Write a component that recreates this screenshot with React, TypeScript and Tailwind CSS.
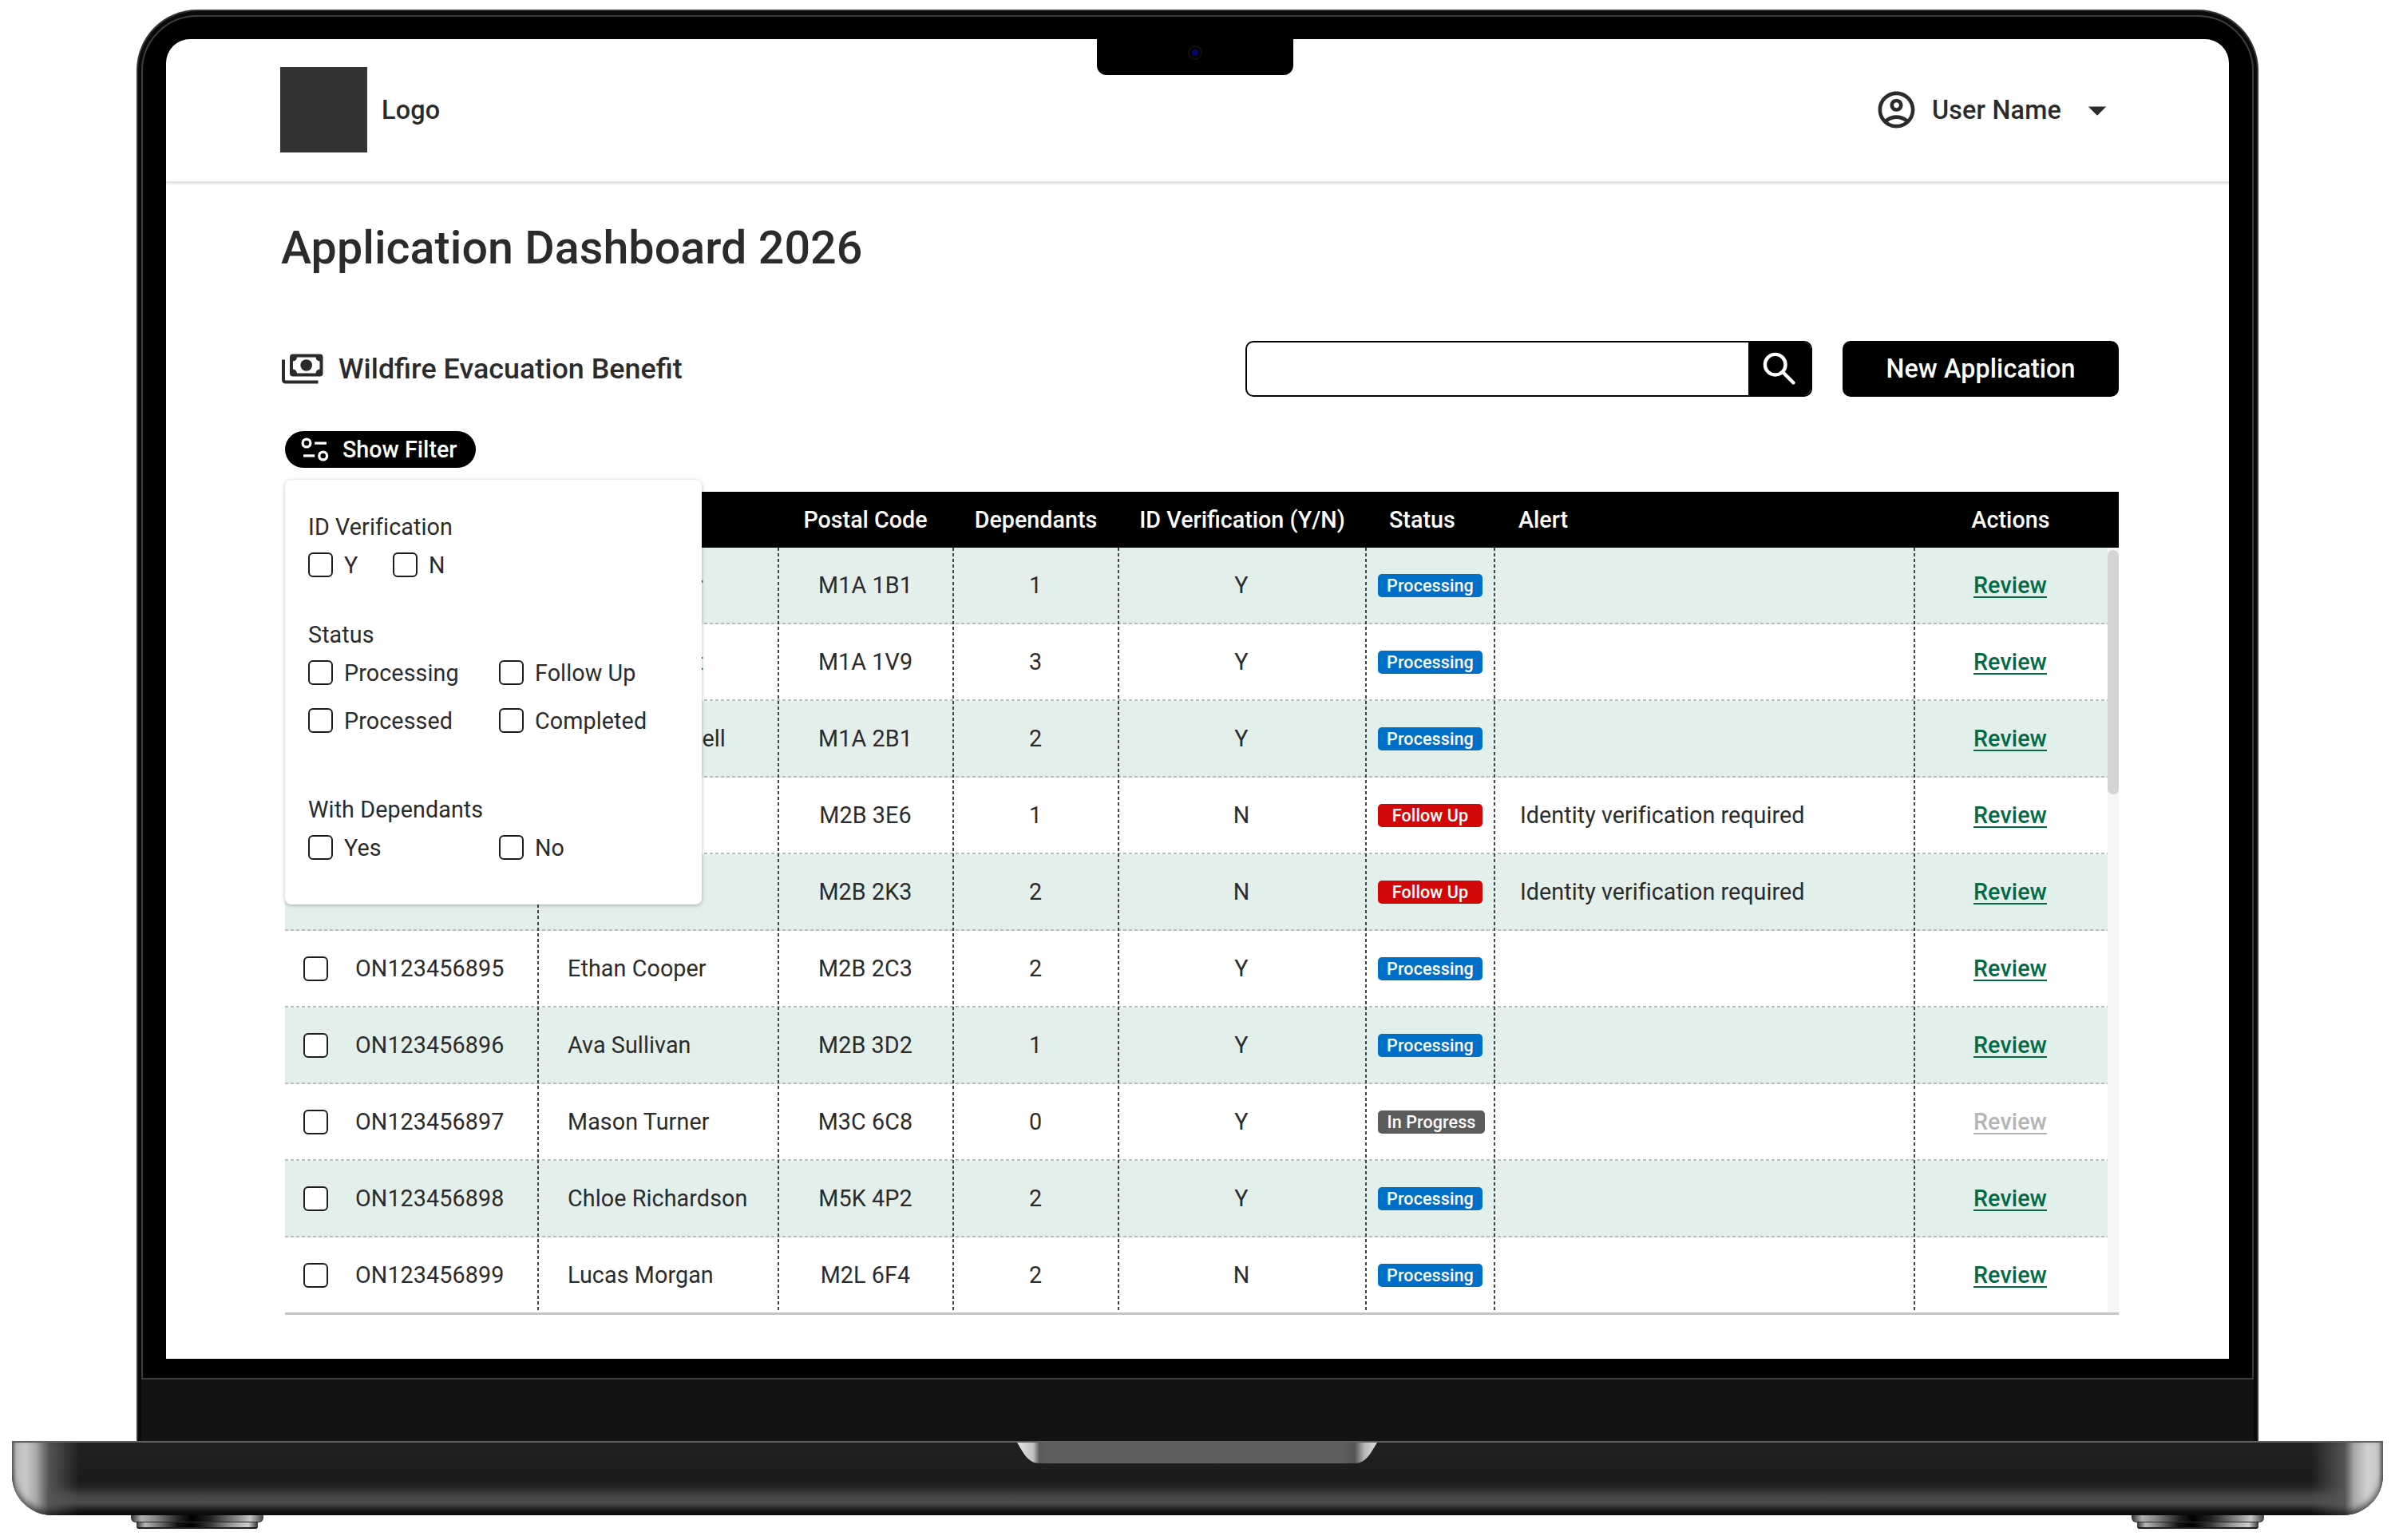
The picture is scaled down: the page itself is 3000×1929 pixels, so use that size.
import { useState } from "react";
import { MdArrowDropDown, MdOutlineAccountCircle } from "react-icons/md";

type Status = "Processing" | "Follow Up" | "In Progress";

type Application = {
  id: string;
  name: string;
  postalCode: string;
  dependants: number;
  verified: "Y" | "N";
  status: Status;
  alert?: string;
};

const applications: Application[] = [
  { id: "ON123456890", name: "Emma Carter", postalCode: "M1A 1B1", dependants: 1, verified: "Y", status: "Processing" },
  { id: "ON123456891", name: "Liam Bennett", postalCode: "M1A 1V9", dependants: 3, verified: "Y", status: "Processing" },
  { id: "ON123456892", name: "Sophia Mitchell", postalCode: "M1A 2B1", dependants: 2, verified: "Y", status: "Processing" },
  {
    id: "ON123456893",
    name: "Noah Reed",
    postalCode: "M2B 3E6",
    dependants: 1,
    verified: "N",
    status: "Follow Up",
    alert: "Identity verification required",
  },
  {
    id: "ON123456894",
    name: "Mia Brooks",
    postalCode: "M2B 2K3",
    dependants: 2,
    verified: "N",
    status: "Follow Up",
    alert: "Identity verification required",
  },
  { id: "ON123456895", name: "Ethan Cooper", postalCode: "M2B 2C3", dependants: 2, verified: "Y", status: "Processing" },
  { id: "ON123456896", name: "Ava Sullivan", postalCode: "M2B 3D2", dependants: 1, verified: "Y", status: "Processing" },
  { id: "ON123456897", name: "Mason Turner", postalCode: "M3C 6C8", dependants: 0, verified: "Y", status: "In Progress" },
  { id: "ON123456898", name: "Chloe Richardson", postalCode: "M5K 4P2", dependants: 2, verified: "Y", status: "Processing" },
  { id: "ON123456899", name: "Lucas Morgan", postalCode: "M2L 6F4", dependants: 2, verified: "N", status: "Processing" },
];

const statusStyles: Record<Status, string> = {
  Processing: "min-w-[131px] bg-[#006fc8]",
  "Follow Up": "min-w-[131px] bg-[#d20808]",
  "In Progress": "min-w-[134px] bg-[#5c5c5c]",
};

const columns = "grid grid-cols-[318px_301px_219px_207px_310px_161px_526px_241px]";

function Checkbox({ label, className = "" }: { label?: string; className?: string }) {
  const [checked, setChecked] = useState(false);

  return (
    <label className={`flex items-center gap-[14px] ${className}`}>
      <input
        type="checkbox"
        className="h-[31px] w-[31px] shrink-0 appearance-none rounded-[6px] border-2 border-[#1d1d1d] bg-white checked:bg-black"
        checked={checked}
        onChange={(event) => setChecked(event.target.checked)}
      />
      {label && <span className="leading-[30px]">{label}</span>}
    </label>
  );
}

function BanknoteIcon() {
  return (
    <svg className="ml-[1px] h-[38px] w-[52px]" viewBox="0 0 52 38" fill="none">
      <path d="M2 7.5V32.5Q2 35.5 5 35.5H45.5" stroke="#2b2b2b" strokeWidth="4" />
      <path
        fillRule="evenodd"
        fill="#2b2b2b"
        d="M14 0.5H47.5Q51.5 0.5 51.5 4.5V24.5Q51.5 28.5 47.5 28.5H14Q10 28.5 10 24.5V4.5Q10 0.5 14 0.5ZM19 4.5Q18.5 9 14 9.5V19.5Q18.5 20 19 24.5H42.5Q43 20 47.5 19.5V9.5Q43 9 42.5 4.5Z"
      />
      <circle cx="30.7" cy="14.5" r="7.3" fill="#2b2b2b" />
    </svg>
  );
}

function SearchIcon() {
  return (
    <svg className="h-[42px] w-[42px]" viewBox="0 0 42 42" fill="none" stroke="white" strokeWidth="4.4" strokeLinecap="round">
      <circle cx="15.7" cy="15.7" r="12.8" />
      <path d="M25 25L38.5 38.5" />
    </svg>
  );
}

function FilterIcon() {
  return (
    <svg className="h-[30px] w-[35px]" viewBox="0 0 35 30" fill="none" stroke="white" strokeWidth="3.3">
      <circle cx="7" cy="7" r="4.9" />
      <path d="M17.2 7.2H32M3 22.8H17.2" />
      <circle cx="27.7" cy="23" r="4.9" />
    </svg>
  );
}

function FilterPanel() {
  return (
    <div className="absolute top-[61px] left-0 z-10 h-[532px] w-[522px] rounded-[8px] bg-white px-[29px] pt-[41px] text-[28.7px] leading-[36px] tracking-[0.1px] shadow-[0_1px_5px_rgba(0,0,0,0.28)]">
      <p>ID Verification</p>
      <div className="mt-[14px] flex">
        <Checkbox label="Y" className="w-[106px]" />
        <Checkbox label="N" />
      </div>

      <p className="mt-[54px]">Status</p>
      <div className="mt-[14px] grid grid-cols-[239px_1fr] gap-y-[29px]">
        <Checkbox label="Processing" />
        <Checkbox label="Follow Up" />
        <Checkbox label="Processed" />
        <Checkbox label="Completed" />
      </div>

      <p className="mt-[78px]">With Dependants</p>
      <div className="mt-[14px] grid grid-cols-[239px_1fr]">
        <Checkbox label="Yes" />
        <Checkbox label="No" />
      </div>
    </div>
  );
}

function ApplicationTable() {
  return (
    <div className="mt-[30px] ml-[5px] w-[2297px] text-[28.7px]">
      <div className={`${columns} h-[70px] items-center bg-black pt-[1px] text-center font-medium text-white`}>
        <span className="text-left">Application ID</span>
        <span className="text-left">Name</span>
        <span className="pr-[3px]">Postal Code</span>
        <span className="pr-[2px]">Dependants</span>
        <span className="pr-[2px]">ID Verification (Y/N)</span>
        <span className="pl-[28px] text-left">Status</span>
        <span className="pl-[29px] text-left">Alert</span>
        <span className="pr-[2px]">Actions</span>
      </div>

      <div className="flex h-[961px] overflow-hidden border-b-[3px] border-[#c4c4c4]">
        <div className="relative w-[2283px] tracking-[0.1px]">
          {applications.map((application) => (
            <div key={application.id} className="h-24 odd:bg-[#e2efea]">
              <div className={`${columns} h-[94px] items-center pt-[1px] text-center`}>
                <div className="flex items-center gap-[34px] pl-[23px]">
                  <Checkbox />
                  <span className="pt-[1px]">{application.id}</span>
                </div>
                <span className="pt-[1px] pl-[36px] text-left">{application.name}</span>
                <span className="pt-[1px] pr-[3px]">{application.postalCode}</span>
                <span className="pt-[1px] pr-[3px]">{application.dependants}</span>
                <span className="pt-[1px] pr-[4px]">{application.verified}</span>
                <span className="flex pl-[14px]">
                  <span
                    className={`${statusStyles[application.status]} h-[29px] rounded-[5px] text-center text-[21.5px] leading-[29px] font-medium text-white`}
                  >
                    {application.status}
                  </span>
                </span>
                <span className="pt-[1px] pl-[31px] text-left tracking-[0.05px]">{application.alert}</span>
                <a
                  className={`pt-[1px] pr-[3px] font-medium underline decoration-2 underline-offset-[4px] ${
                    application.status === "In Progress" ? "text-[#b5b5b5]" : "text-[#046a45]"
                  }`}
                >
                  Review
                </a>
              </div>
              <div className="h-[2px] bg-[repeating-linear-gradient(to_right,#b9bebc_0_4px,transparent_4px_7px)]" />
            </div>
          ))}

          {/* column rules run unbroken through every row */}
          <div className={`${columns} pointer-events-none absolute inset-x-0 top-0 h-[956px]`}>
            {[0, 1, 2, 3, 4, 5, 6].map((column) => (
              <span key={column} className="flex justify-end">
                <span className="w-[2px] bg-[repeating-linear-gradient(to_bottom,#444_0_4px,transparent_4px_7.1px)]" />
              </span>
            ))}
          </div>
        </div>
        <div className="w-[14px] bg-[#f5f5f5] pt-[3px]">
          <div className="h-[306px] rounded-full bg-[#d5d3d4]" />
        </div>
      </div>
    </div>
  );
}

function Dashboard() {
  const [filterOpen, setFilterOpen] = useState(true);

  return (
    <div className="relative h-[1653px] w-[2584px] overflow-hidden rounded-t-[30px] bg-white text-[#2b2b2b]">
      <div className="absolute top-0 left-[1166px] flex h-[45px] w-[246px] justify-center rounded-b-[12px] bg-black pt-[8px]">
        <span className="flex h-[18px] w-[18px] items-center justify-center rounded-full border-2 border-[#101010]">
          <span className="h-[8px] w-[8px] rounded-full bg-[#050570]" />
        </span>
      </div>

      <header className="flex h-[180px] items-center justify-between border-b-2 border-[#e2e2e2] pr-[138px] pb-[1px] pl-[143px] text-[32.3px] font-medium tracking-[0.2px] shadow-[0_1px_3px_rgba(0,0,0,0.14)]">
        <div className="flex items-center gap-[18px]">
          <div className="h-[107px] w-[109px] bg-[#333]" />
          <span className="pt-[2px]">Logo</span>
        </div>
        <div className="flex items-center">
          <MdOutlineAccountCircle className="mr-[17px] h-[55px] w-[55px]" />
          <span className="pt-[2px]">User Name</span>
          <MdArrowDropDown className="ml-[18px] h-[54px] w-[54px]" />
        </div>
      </header>

      <main className="pr-[138px] pl-[144px]">
        <h1 className="pt-[50px] text-[57.4px] leading-[64px] font-medium tracking-[0.05px]">Application Dashboard 2026</h1>

        <div className="mt-[84px] flex h-[70px] items-center">
          <BanknoteIcon />
          <h2 className="ml-[19px] pt-[2px] text-[35.9px] font-medium">Wildfire Evacuation Benefit</h2>
          <form className="ml-auto flex h-[70px] w-[710px] overflow-hidden rounded-[10px] border-2 border-black">
            <input className="min-w-0 flex-1 px-4 outline-none" aria-label="Search" />
            <button type="button" className="flex w-[78px] items-center justify-center bg-black text-white">
              <SearchIcon />
            </button>
          </form>
          <button type="button" className="ml-[38px] h-[70px] w-[346px] rounded-[10px] bg-black pt-[1px] text-[32.3px] font-medium tracking-[0.1px] text-white">
            New Application
          </button>
        </div>

        <div className="relative mt-[43px] ml-[5px]">
          <button
            type="button"
            className="flex h-[46px] w-[239px] items-center rounded-full bg-black pl-[20px] text-[28.7px] font-medium text-white"
            onClick={() => setFilterOpen((open) => !open)}
          >
            <FilterIcon />
            <span className="ml-[17px] pt-[2px]">Show Filter</span>
          </button>
          {filterOpen && <FilterPanel />}
        </div>

        <ApplicationTable />
      </main>
    </div>
  );
}

function Foot() {
  return (
    <div className="flex w-[166px] flex-col items-center">
      <div className="h-[9px] w-full rounded-b-[6px] border-b border-[#2a2a2a] bg-[linear-gradient(to_right,#333_0%,#b0b0b0_8%,#8a8a8a_18%,#222_36%,#000_46%,#222_60%,#8a8a8a_80%,#c6c6c6_90%,#444_100%)]" />
      <div className="h-[8px] w-[152px] rounded-b-[3px] border-b-2 border-[#1e1e1e] bg-[linear-gradient(to_right,#333_0%,#b8b8b8_7%,#777_18%,#111_34%,#000_46%,#333_60%,#999_78%,#d0d0d0_92%,#333_100%)]" />
    </div>
  );
}

export default function App() {
  return (
    <div className="flex h-[1929px] w-[3000px] flex-col items-center overflow-hidden bg-white pt-[12px] font-[Roboto,sans-serif]">
      <div className="h-[1793px] w-[2658px] rounded-t-[76px] border-x-2 border-t-2 border-[#333] bg-[#0a0a0a] px-[4px] pt-[5px]">
        <div className="flex h-[1709px] justify-center rounded-t-[70px] border-2 border-[#3d3d3d] bg-black pt-[28px]">
          <Dashboard />
        </div>
        <div className="h-[77px] bg-[#131313]" />
      </div>

      <div className="relative h-[93px] w-[2970px] overflow-hidden rounded-b-[50px] border-t-2 border-[#606060] bg-[linear-gradient(to_bottom,#212121_0%,#1b1b1b_52%,#222_60%,#464646_74%,#4b4b4b_83%,#303030_90%,#151515_97%)]">
        <div className="h-full rounded-b-[50px] bg-[linear-gradient(to_right,#777_0px,#bdbdbd_5px,#c8c8c8_18px,#a8a8a8_30px,#555_46px,transparent_84px,transparent_2880px,#555_2922px,#a8a8a8_2934px,#d0d0d0_2950px,#c8c8c8_2964px,#777_2970px)] shadow-[inset_0_-5px_8px_rgba(0,0,0,0.6)]" />

        {/* thumb cut-out for opening the lid */}
        <svg className="absolute top-0 left-[1259px] h-[26px] w-[451px]" viewBox="0 0 451 27" preserveAspectRatio="none">
          <defs>
            <linearGradient id="cutout">
              <stop offset="0" stopColor="#e6e6e6" />
              <stop offset="0.045" stopColor="#c0c0c0" />
              <stop offset="0.062" stopColor="#5a5a5a" />
              <stop offset="0.1" stopColor="#5f5f5f" />
              <stop offset="0.9" stopColor="#5f5f5f" />
              <stop offset="0.938" stopColor="#555" />
              <stop offset="0.965" stopColor="#b8b8b8" />
              <stop offset="1" stopColor="#e0e0e0" />
            </linearGradient>
          </defs>
          <path d="M0 0C8 13 13 27 29 27H422C438 27 443 13 451 0Z" fill="url(#cutout)" />
        </svg>
      </div>

      <div className="flex w-[2672px] justify-between">
        <Foot />
        <Foot />
      </div>
    </div>
  );
}
